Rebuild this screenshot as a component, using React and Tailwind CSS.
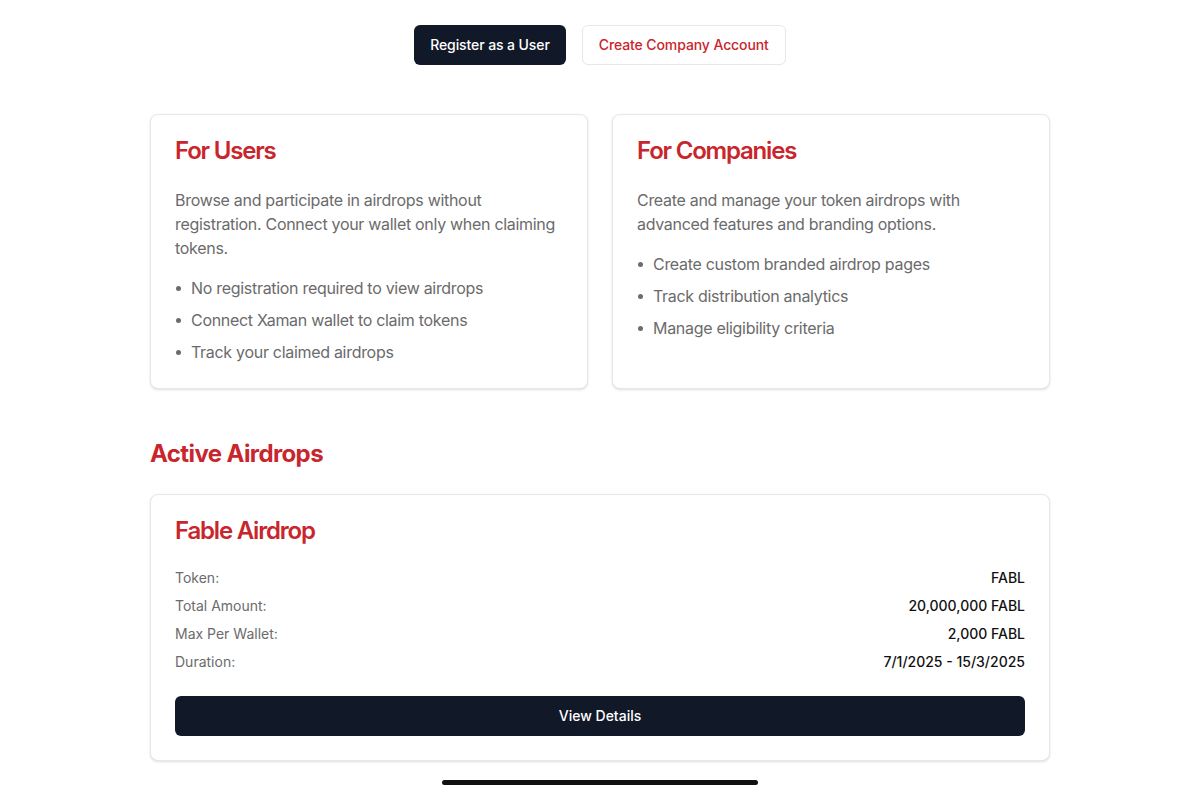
import React from 'react';

const userPoints = [
  'No registration required to view airdrops',
  'Connect Xaman wallet to claim tokens',
  'Track your claimed airdrops'
];

const companyPoints = [
  'Create custom branded airdrop pages',
  'Track distribution analytics',
  'Manage eligibility criteria'
];

const airdrop = {
  name: 'Fable Airdrop',
  rows: [
    { label: 'Token:', value: 'FABL' },
    { label: 'Total Amount:', value: '20,000,000 FABL' },
    { label: 'Max Per Wallet:', value: '2,000 FABL' },
    { label: 'Duration:', value: '7/1/2025 - 15/3/2025' }
  ]
};

const InfoCard = ({ title, text, points }) => (
  <div className="bg-white border border-gray-200 rounded-lg shadow-sm px-6 pt-6 pb-6">
    <h2 className="text-2xl leading-6 font-semibold tracking-[-0.05em] text-[#c9252c]">{title}</h2>
    <p className="mt-[25px] text-base leading-6 tracking-[-0.3px] text-[#6b6b6b]">{text}</p>
    <ul className="mt-4 space-y-2">
      {points.map(p => (
        <li key={p} className="flex items-center text-base leading-6 tracking-[-0.3px] text-[#6b6b6b]">
          <span className="w-[5px] h-[5px] rounded-full bg-[#6b6b6b] ml-[1px] mr-[10px]" />
          {p}
        </li>
      ))}
    </ul>
  </div>
);

const App = () => {
  return (
    <div className="min-h-screen bg-white" style={{ fontFamily: 'Inter, "Noto Sans", sans-serif' }}>
      <div className="max-w-[900px] mx-auto pt-[25px] pb-10">
        <div className="flex justify-center gap-4">
          <button className="h-10 px-4 rounded-md bg-[#111827] text-white text-sm tracking-[-0.1px] font-medium">
            Register as a User
          </button>
          <button className="h-10 px-4 rounded-md bg-white border border-gray-200 text-[#c9252c] text-sm tracking-[-0.1px] font-medium">
            Create Company Account
          </button>
        </div>

        <div className="mt-[49px] grid grid-cols-2 gap-6">
          <InfoCard
            title="For Users"
            text="Browse and participate in airdrops without registration. Connect your wallet only when claiming tokens."
            points={userPoints}
          />
          <InfoCard
            title="For Companies"
            text="Create and manage your token airdrops with advanced features and branding options."
            points={companyPoints}
          />
        </div>

        <h2 className="mt-[49px] text-2xl leading-8 font-bold tracking-tight text-[#c9252c]">Active Airdrops</h2>

        <div className="mt-6 bg-white border border-gray-200 rounded-lg shadow-sm p-6">
          <h3 className="text-2xl leading-6 font-semibold tracking-[-0.05em] text-[#c9252c]">{airdrop.name}</h3>
          <div className="mt-[25px] flex flex-col gap-2">
            {airdrop.rows.map(r => (
              <div key={r.label} className="flex justify-between text-sm leading-5">
                <span className="text-[#6b6b6b]">{r.label}</span>
                <span className="text-[#111111] font-medium">{r.value}</span>
              </div>
            ))}
          </div>
          <button className="mt-6 w-full h-10 rounded-md bg-[#111827] text-white text-sm font-medium">
            View Details
          </button>
        </div>
      </div>

      {/* home indicator */}
      <div className="fixed left-1/2 -translate-x-1/2 bottom-[8px] w-[316px] h-[5px] rounded-full bg-[#111]" />
    </div>
  );
};

export default App;
